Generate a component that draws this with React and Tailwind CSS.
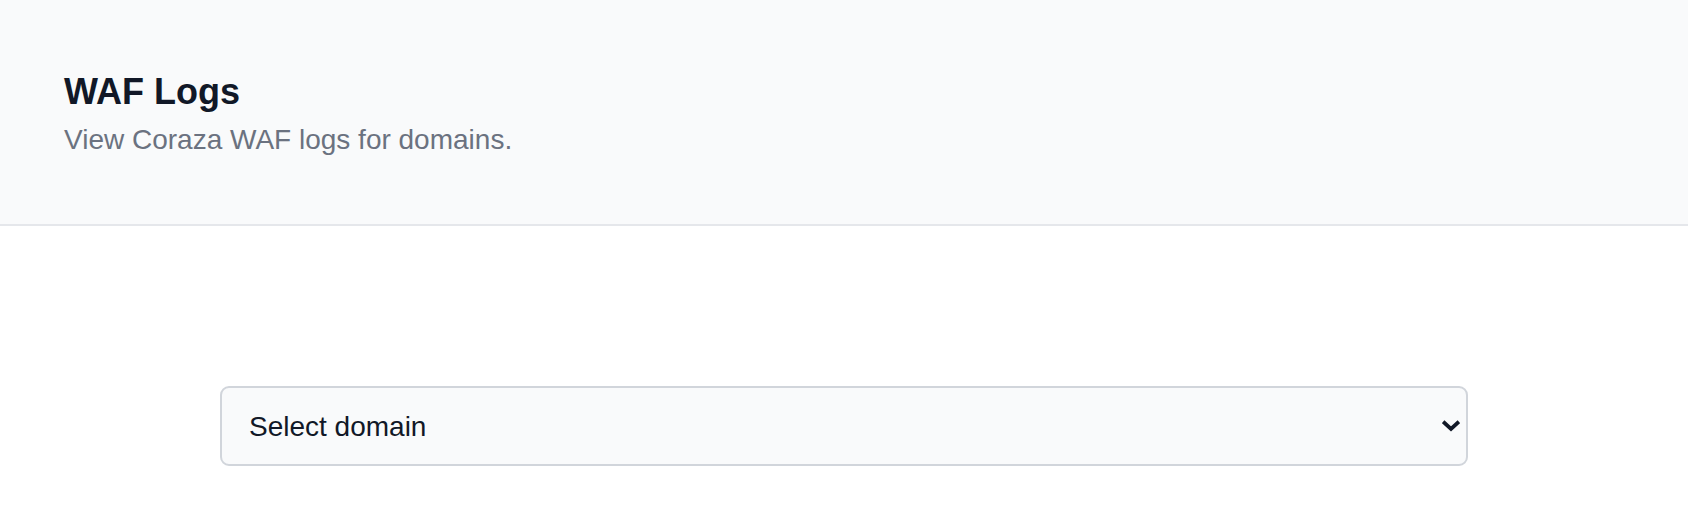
import React, { useState } from "react";

function ChevronDown() {
  return (
    <svg
      viewBox="0 0 18 12"
      className="pointer-events-none absolute right-[8px] top-1/2 h-[12px] w-[18px] -translate-y-1/2"
      fill="none"
      stroke="#111827"
      strokeWidth="3.8"
      strokeLinecap="square"
    >
      <path d="M2.5 3l6.5 6 6.5-6" />
    </svg>
  );
}

function App() {
  const [domain, setDomain] = useState("");

  return (
    <div className="min-h-[530px] bg-white font-['Liberation_Sans',Arial,sans-serif]">
      {/* Page header */}
      <div className="border-b-2 border-[#e5e7eb] bg-[#f9fafb] px-[64px] pt-[68px] pb-[63px]">
        <h1 className="text-[36px] font-bold leading-[48px] text-[#111827]">
          WAF Logs
        </h1>
        <p className="mt-[3px] text-[28px] leading-[42px] text-[#6b7280]">
          View Coraza WAF logs for domains.
        </p>
      </div>

      {/* Domain picker */}
      <div className="px-[220px] pt-[160px]">
        <div className="relative">
          <select
            value={domain}
            onChange={(e) => setDomain(e.target.value)}
            className="h-[80px] w-full appearance-none rounded-[9px] border-2 border-[#d1d5db] bg-[#f9fafb] pl-[27px] pr-[40px] pt-[2px] text-[28px] text-[#111827] outline-none"
          >
            <option value="">Select domain</option>
          </select>
          <ChevronDown />
        </div>
      </div>
    </div>
  );
}

export default App;
